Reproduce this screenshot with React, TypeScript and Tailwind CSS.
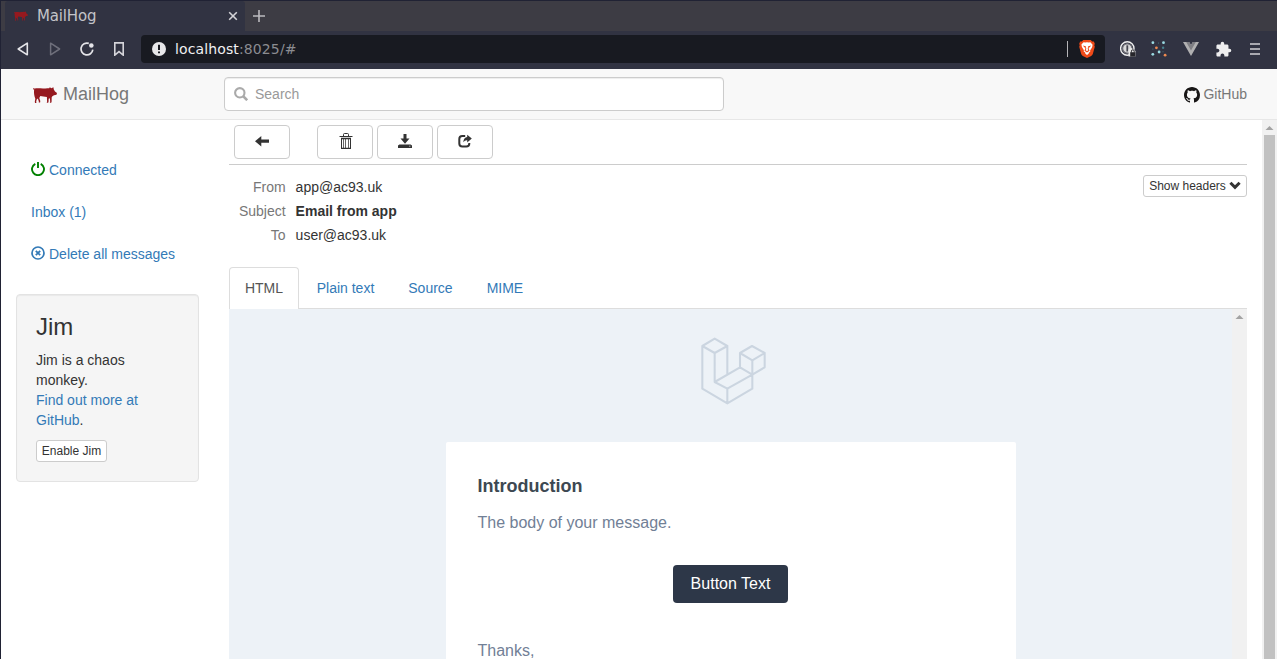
import type { ReactNode } from 'react';
import { MdExtension } from 'react-icons/md';

function Pig({ className }: { className: string }) {
  return (
    <svg viewBox="0 0 24 16" className={className} fill="#95191f">
      <path d="M0 1.5C.6.9 1.2 1.5 1.9 1.6C4 .8 7 1.3 10 1.5C12 1.4 14 1 16.2 1.3L16.8.2L18.4 1.2L20.4.3L20.8 2.6L22 4.6L24 6L23.5 7.7L21 8.2L19.4 9.3L18.7 10.2L18.6 14.8L18.2 15.7H16.8L17.2 14.6L16.9 11.2L15.7 11.7L15.5 15L15.1 15.8H13.7L14.1 14.8L13.9 10C11.6 9.7 9.2 9.3 7.3 9L6.3 11L7.3 14L7.1 15.5H5.8L5.8 14.3L4.8 11.6L3.7 12.4L3.2 14.4L3.4 16H2L1.8 14.4L2.3 11.8L1.5 9.2C1 7 .8 4.6 1.2 2.6L.3 2.5Z" />
    </svg>
  );
}

function GitHubMark({ className }: { className: string }) {
  return (
    <svg viewBox="0 0 16 16" className={className} fill="currentColor">
      <path d="M8 0C3.58 0 0 3.58 0 8c0 3.54 2.29 6.53 5.47 7.59.4.07.55-.17.55-.38 0-.19-.01-.82-.01-1.49-2.01.37-2.53-.49-2.69-.94-.09-.23-.48-.94-.82-1.13-.28-.15-.68-.52-.01-.53.63-.01 1.08.58 1.23.82.72 1.21 1.87.87 2.33.66.07-.52.28-.87.51-1.07-1.78-.2-3.64-.89-3.64-3.95 0-.87.31-1.59.82-2.15-.08-.2-.36-1.02.08-2.12 0 0 .67-.21 2.2.82.64-.18 1.32-.27 2-.27s1.36.09 2 .27c1.53-1.04 2.2-.82 2.2-.82.44 1.1.16 1.92.08 2.12.51.56.82 1.27.82 2.15 0 3.07-1.87 3.75-3.65 3.95.29.25.54.73.54 1.48 0 1.07-.01 1.93-.01 2.2 0 .21.15.46.55.38A8.01 8.01 0 0 0 16 8c0-4.42-3.58-8-8-8Z" />
    </svg>
  );
}

function IconButton({ children, className = '' }: { children: ReactNode; className?: string }) {
  return (
    <button className={`flex h-[34px] w-14 items-center justify-center rounded border border-[#ccc] bg-white pb-[2px] ${className}`}>
      {children}
    </button>
  );
}

function BrowserChrome() {
  return (
    <div className="shrink-0">
      <div className="flex h-[30px] bg-[#3d3c44] pl-1">
        <div className="flex w-60 items-center rounded-t-[3px] bg-[#313342] pl-[9px] pr-[7px]">
          <Pig className="h-3 w-[14px]" />
          <span className="ml-[9px] flex-1 font-['DejaVu_Sans'] text-[15px] leading-[30px] tracking-[-0.15px] text-[#c3c4c9]">MailHog</span>
          <svg className="h-[10px] w-[10px]" viewBox="0 0 10 10" fill="none" stroke="#d3d3d7" strokeWidth="1.6">
            <path d="M1.2 1.2 8.8 8.8M8.8 1.2 1.2 8.8" />
          </svg>
        </div>
        <svg className="ml-2 mt-[9px] h-3 w-3" viewBox="0 0 12 12" fill="none" stroke="#bbbabf" strokeWidth="1.6">
          <path d="M6 0v12M0 6h12" />
        </svg>
      </div>
      <div className="flex h-[38px] items-center bg-[#313342] pb-[2px]">
        <svg className="ml-4 h-[14px] w-3" viewBox="0 0 12 14" fill="none" stroke="#e4e4e8" strokeWidth="1.6" strokeLinejoin="round">
          <path d="M10.3 1.2v11.6L1.2 7Z" />
        </svg>
        <svg className="ml-5 h-[14px] w-3" viewBox="0 0 12 14" fill="none" stroke="#6e6f7b" strokeWidth="1.5" strokeLinejoin="round">
          <path d="M1.6 1.2v11.6L10.6 7Z" />
        </svg>
        <svg className="ml-[19px] h-[14px] w-[14px]" viewBox="0 0 14 14" fill="none" stroke="#e4e4e8" strokeWidth="1.7">
          <path d="M12.8 7.6A5.9 5.9 0 1 1 8.8 1.4" />
          <circle cx="11.3" cy="3.5" r="2.3" fill="#e4e4e8" stroke="none" />
        </svg>
        <svg className="ml-5 h-[14px] w-[10px]" viewBox="0 0 10 14" fill="none" stroke="#d5d5da" strokeWidth="1.6">
          <path d="M.8.9h8.4v12.2L5 9.6.8 13.1Z" />
        </svg>
        <div className="ml-[17px] flex h-7 w-[964px] items-center rounded bg-[#181a21] pl-[11px] pr-[10px]">
          <svg className="h-[14px] w-[14px]" viewBox="0 0 14 14">
            <circle cx="7" cy="7" r="7" fill="#e8e8ea" />
            <path d="M7 2.8v5.1M7 9.4v1.9" stroke="#181a21" strokeWidth="2" />
          </svg>
          <div className="ml-[9px] flex-1 whitespace-nowrap font-['DejaVu_Sans'] text-[14px] tracking-[0.12px] text-[#8b8c91]">
            <span className="text-[#f0f0f1]">localhost</span>:8025/#
          </div>
          <div className="h-4 w-px bg-[#b5b5b8]" />
          <svg className="ml-[11px] h-[18px] w-4" viewBox="0 0 16 18">
            <path d="M4.3 0h7.4l1.5 1.6 1.6-.2 1 2.4-.5 1.4.5 1.6-2 7.3q-.4 1.2-1.6 2L8 18l-4.2-1.9q-1.2-.8-1.6-2l-2-7.3.5-1.6L.2 3.8l1-2.4 1.6.2Z" fill="#f04a18" />
            <path d="m4.6 2.2 1.7.4L8 2.2l1.7.4 1.7-.4 2.2 2.6-.5 2.4-2 3.2.2 1.2-1.5 1.2v.8L8 15l-1.8-1.6v-.8l-1.5-1.2.2-1.2-2-3.2-.5-2.4Z" fill="#fff" />
            <path d="m3.8 5.5 3 .8.5 2.4-.5 1.8L8 11l1.2-.5-.5-1.8.5-2.4 3-.8-1.7 1.9-.8.1.1 1.5.7 1.8L8 12.5l-2.5-1.7.7-1.8.1-1.5-.8-.1Z" fill="#f04a18" />
          </svg>
        </div>
        <svg className="ml-[15px] h-4 w-4" viewBox="0 0 16 16">
          <circle cx="7.3" cy="7.5" r="6.7" fill="none" stroke="#efefef" strokeWidth="1.4" />
          <circle cx="7.3" cy="7.5" r="4.7" fill="#d9d9da" stroke="#6c6c74" strokeWidth="1.3" />
          <path d="M7.3 4.3v6.2" stroke="#454650" strokeWidth="1.8" />
          <path d="M8.5 8.5 11 6.7l4.5 3.2v5.6h-7Z" fill="#e8e8e8" />
          <path d="M10.2 11.2h5.2v4.4h-5.2Z" fill="#26262b" />
          <path d="M11.4 11.5v-1.3a1.4 1.4 0 0 1 2.8 0v1.3" fill="none" stroke="#26262b" />
        </svg>
        <svg className="ml-[15px] h-4 w-4" viewBox="0 0 16 16">
          <g fill="#9bdbe2"><circle cx="1.9" cy="1.7" r="1.4" /><circle cx="12.5" cy="1.7" r="1.4" /><circle cx="8.1" cy="11" r="1.4" /><circle cx="1.8" cy="13.3" r="1.4" /></g>
          <g fill="#477f8c"><circle cx="7.5" cy="1.9" r=".5" /><circle cx="12.1" cy="6.8" r="1.2" /><circle cx="1.9" cy="8" r=".5" /><circle cx="12" cy="10.7" r=".5" /></g>
          <circle cx="5.4" cy="6.8" r="1.4" fill="#ed8a50" /><circle cx="14.1" cy="14.2" r="1.4" fill="#ed8a50" />
        </svg>
        <svg className="ml-4 h-[14px] w-4" viewBox="0 0 16 14">
          <path d="M0 0h6.2L8 3 9.8 0H16L8 14Z" fill="#b0b0b1" />
          <path d="M3.2 0h3L8 3 9.8 0h3L8 8.4Z" fill="#7e7e83" />
        </svg>
        <MdExtension className="ml-4 h-[17px] w-[17px] text-[#eeeeef]" />
        <svg className="ml-[18px] h-3 w-[10px]" viewBox="0 0 10 12" stroke="#d1d1d5" strokeWidth="1.7">
          <path d="M0 1h10M0 6h10M0 11h10" />
        </svg>
      </div>
    </div>
  );
}

function Navbar() {
  return (
    <header className="flex h-[51px] shrink-0 items-center border-b border-[#e7e7e7] bg-[#f8f8f8] pl-8 pr-[30px]">
      <Pig className="mt-px h-4 w-6" />
      <span className="ml-[6px] w-[161px] text-[18px] text-[#777]">MailHog</span>
      <div className="flex h-[34px] w-[500px] items-center rounded border border-[#ccc] bg-white pl-[9px] shadow-[inset_0_1px_1px_rgba(0,0,0,0.075)]">
        <svg className="h-[14px] w-[14px]" viewBox="0 0 14 14" fill="none" stroke="#aaa">
          <circle cx="5.8" cy="5.8" r="4.7" strokeWidth="2.1" />
          <path d="m9 9 4.2 4.2" strokeWidth="2.6" />
        </svg>
        <span className="ml-[7px] text-[#999]">Search</span>
      </div>
      <div className="ml-auto flex items-center text-[#777]">
        <GitHubMark className="mr-[3px] mt-[2px] h-4 w-4 text-[#181616]" />
        <span>GitHub</span>
      </div>
    </header>
  );
}

function Sidebar() {
  return (
    <aside className="w-[198px] shrink-0 pl-[15px] pt-[30px] text-[#337ab7]">
      <div className="flex h-10 items-center pl-[15px]">
        <svg className="-mt-[2px] mr-1 h-[14px] w-[14px]" viewBox="0 0 14 14" fill="none" stroke="#008000" strokeWidth="1.9">
          <path d="M4.3 1.8A6 6 0 1 0 9.7 1.8M7 0v6" />
        </svg>
        Connected
      </div>
      <div className="mt-[2px] flex h-10 items-center pl-[15px]">Inbox (1)</div>
      <div className="mt-[2px] flex h-10 items-center pl-[15px]">
        <svg className="-mt-[2px] mr-1 h-[14px] w-[14px]" viewBox="0 0 14 14" fill="none" stroke="#337ab7">
          <circle cx="7" cy="7" r="6" strokeWidth="1.7" />
          <path d="m4.8 4.8 4.4 4.4M9.2 4.8 4.8 9.2" strokeWidth="1.8" />
        </svg>
        Delete all messages
      </div>
      <section className="mt-5 h-[188px] rounded border border-[#e3e3e3] bg-[#f5f5f5] px-[19px] pt-[19px] text-[#333] shadow-[inset_0_1px_1px_rgba(0,0,0,0.05)]">
        <h3 className="text-[24px] leading-[26px]">Jim</h3>
        <p className="mt-[10px]">
          Jim is a chaos<br />monkey.<br />
          <span className="text-[#337ab7]">Find out more at<br />GitHub</span>.
        </p>
        <button className="mt-[10px] flex h-[22px] w-[71px] items-center justify-center rounded-[3px] border border-[#ccc] bg-white text-[12px]">Enable Jim</button>
      </section>
    </aside>
  );
}

function ScrollArrow() {
  return (
    <svg className="h-4 w-full" viewBox="0 0 15 16"><path d="M3.5 10h8l-4-4Z" fill="#a3a3a3" /></svg>
  );
}

function Toolbar() {
  return (
    <div className="flex h-[45px] shrink-0 items-start border-b border-[#ccc] pl-[5px] pt-[5px]">
      <IconButton>
        <svg className="h-[14px] w-[14px]" viewBox="0 0 14 14" fill="#333"><path d="M0 7.2 6.3 2v3.6H14v3.2H6.3v3.6Z" /></svg>
      </IconButton>
      <IconButton className="ml-[27px]">
        <svg className="ml-[2px] h-4 w-[14px]" viewBox="0 0 14 16" fill="none" stroke="#333">
          <path d="M.5 3.5h13M4.5 3V1.5q0-1 1-1h3q1 0 1 1V3M2.5 5.5h9v10h-9Z" />
          <path d="M2 5.5h10M2 15.4h10" strokeWidth="1.3" />
          <path d="M4.5 6v9M6.5 6v9M9.5 6v9" strokeWidth=".75" />
        </svg>
      </IconButton>
      <IconButton className="ml-1">
        <svg className="h-[14px] w-[14px]" viewBox="0 0 14 14" fill="#333"><path d="M5.5 0h3v4.6h3L7 9.7 2.5 4.6h3ZM1.4 10.5h11.2l1.4 1V14H0v-2.5ZM11.2 11.8v.8h1.2v-.8Z" fillRule="evenodd" /></svg>
      </IconButton>
      <IconButton className="ml-1">
        <svg className="h-[14px] w-[14px]" viewBox="0 0 14 14">
          <path d="M7.2 2H4.3Q1.3 2 1.3 5v4.5q0 3 3 3h4q3 0 3-3V8.9" fill="none" stroke="#333" strokeWidth="2" />
          <path d="M9.2.7 13.8 4.6 9.2 8.4V6.3Q6.8 6.1 5.3 8.2q.4-4.6 3.9-5.1Z" fill="#333" />
        </svg>
      </IconButton>
    </div>
  );
}

function MessageDetails() {
  return (
    <div className="flex h-[102px] shrink-0 items-start justify-between pt-[10px]">
      <dl className="grid grid-cols-[56.6px_auto] gap-x-[10px] leading-6">
        <dt className="text-right text-[#777]">From</dt><dd>app@ac93.uk</dd>
        <dt className="text-right text-[#777]">Subject</dt><dd className="font-bold">Email from app</dd>
        <dt className="text-right text-[#777]">To</dt><dd>user@ac93.uk</dd>
      </dl>
      <button className="flex h-[22px] w-[104px] items-center justify-center rounded-[3px] border border-[#ccc] bg-white text-[12px]">
        Show headers
        <svg className="-mt-[3px] ml-[3px] h-3 w-3" viewBox="0 0 12 12" fill="none" stroke="#333" strokeWidth="3"><path d="m1.4 3.8 4.6 4.6 4.6-4.6" /></svg>
      </button>
    </div>
  );
}

function Tabs() {
  return (
    <div className="flex h-[42px] shrink-0 border-b border-[#ddd] leading-[42px] text-[#337ab7]">
      <div className="-mb-px h-[42px] w-[70px] rounded-t border border-b-0 border-[#ddd] bg-white text-center leading-[41px] text-[#555]">HTML</div>
      <span className="ml-[17.7px]">Plain text</span>
      <span className="ml-[34px]">Source</span>
      <span className="ml-[34px]">MIME</span>
    </div>
  );
}

function EmailPreview() {
  return (
    <div className="flex min-h-0 flex-1">
      <div className="flex flex-1 flex-col items-center bg-[#edf2f7]">
        <svg className="ml-[6px] mt-7 h-[70px] w-[70px] shrink-0" viewBox="0 0 210 210" fill="none" stroke="#cbd5e0" strokeWidth="6.2" strokeLinejoin="round">
          <path d="M10 27 47 5l38 22-38 21ZM10 27v128l75 44 75-44v-42M85 27v86M47 48v87l38 20 75-42-37-22-76 44M85 155v44M123 48l36-21 38 21-37 22ZM123 48v43M197 48v43l-37 22V70" />
        </svg>
        <div className="mt-[35px] flex w-[570px] flex-1 flex-col overflow-hidden rounded-t-[2px] bg-white px-8 pt-8 text-[16px] leading-6 text-[#718096] shadow-[0_2px_0_rgba(0,0,150,0.025)]">
          <h1 className="text-[18px] font-bold leading-6 text-[#3d4852]">Introduction</h1>
          <p className="mt-[13px]">The body of your message.</p>
          <button className="mt-[30px] h-[38px] w-[115px] shrink-0 self-center rounded bg-[#2d3748] pb-px text-white">Button Text</button>
          <p className="mt-9">Thanks,</p>
        </div>
      </div>
      <div className="w-[15px] bg-[#f1f1f1]"><ScrollArrow /></div>
    </div>
  );
}

export default function App() {
  return (
    <div className="flex h-[659px] w-[1277px] flex-col overflow-hidden border-l border-t border-[#202234] bg-white font-['Liberation_Sans',Arial,sans-serif] text-[14px] leading-5 text-[#333]">
      <BrowserChrome />
      <Navbar />
      <div className="flex min-h-0 flex-1">
        <Sidebar />
        <main className="ml-[30px] flex w-[1018px] shrink-0 flex-col">
          <Toolbar />
          <MessageDetails />
          <Tabs />
          <EmailPreview />
        </main>
        <div className="ml-[15px] flex w-[15px] flex-col bg-[#f1f1f1]">
          <div className="h-[15px]"><ScrollArrow /></div>
          <div className="mx-[2px] flex-1 bg-[#c1c1c1]" />
        </div>
      </div>
    </div>
  );
}
